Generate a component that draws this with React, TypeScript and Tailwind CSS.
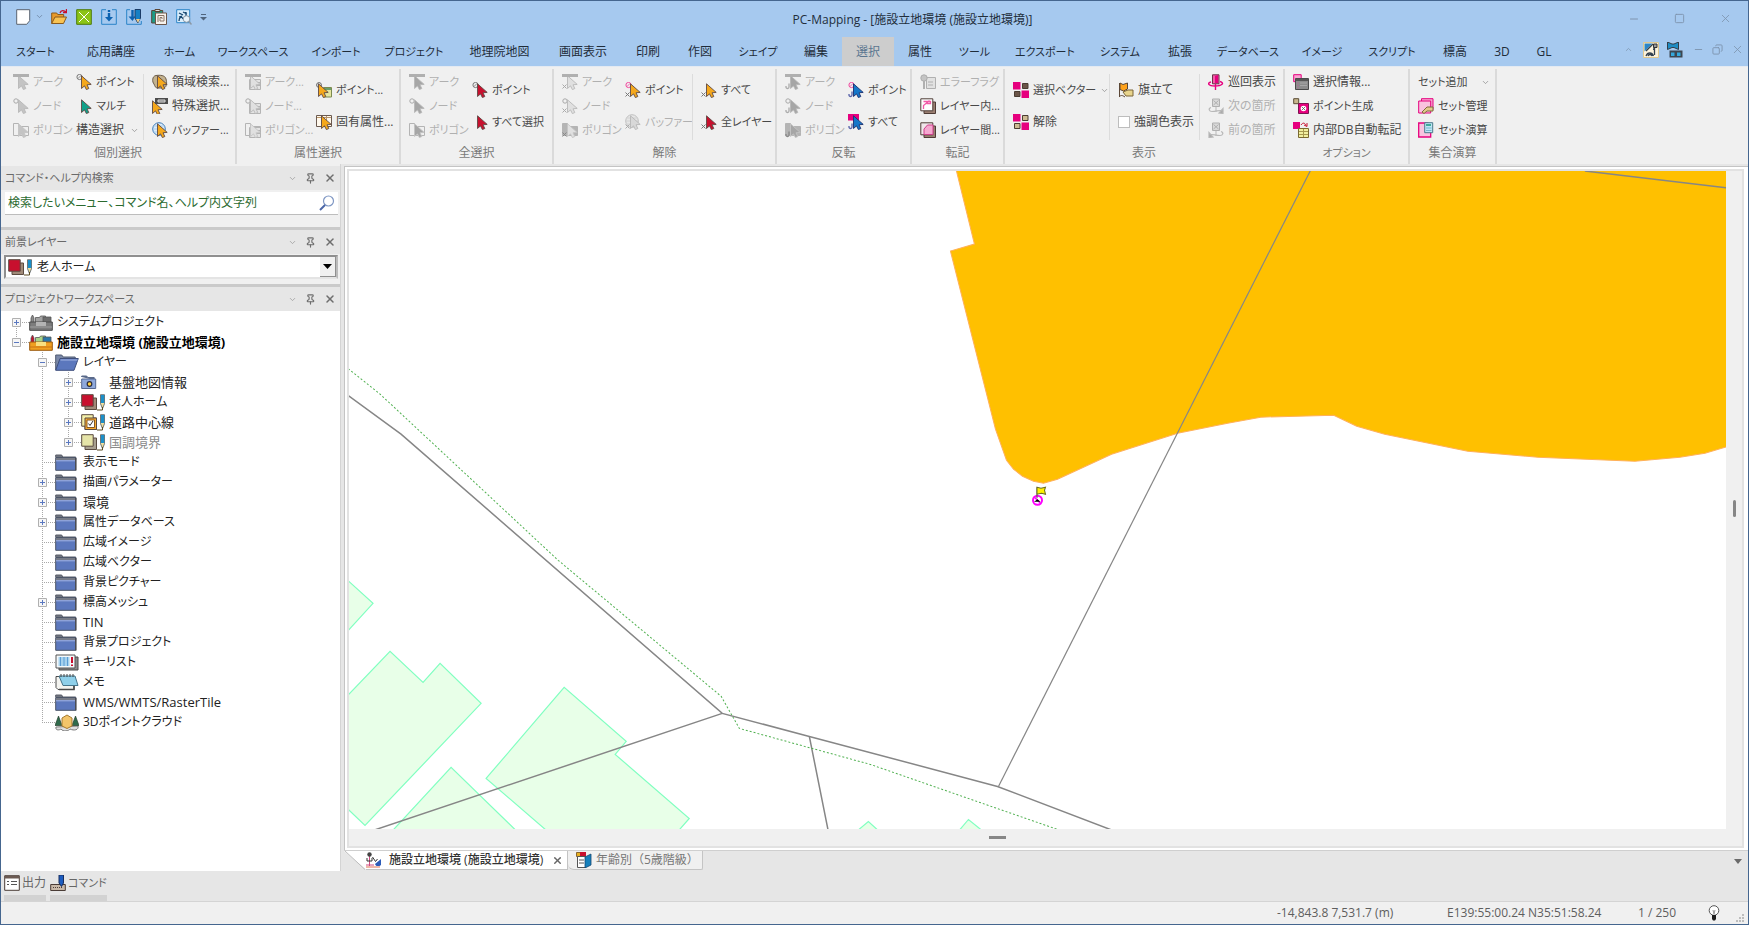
import { ReactNode } from "react";
import { ChevronDown, ChevronUp, Minus, Pin, Square, X, Copy } from "lucide-react";
import clsx from "clsx";

const isKana = (t: string) => (t.match(/[\u3040-\u30ff]/g) ?? []).length * 2 > t.replace(/\./g, "").length;

/* ---------- small drawings ---------- */

const Ico = ({ w = 16, h = 16, children }: { w?: number; h?: number; children: ReactNode }) => (
  <svg width={w} height={h} viewBox={`0 0 ${w} ${h}`} fill="none" className="shrink-0" aria-hidden="true">
    {children}
  </svg>
);

const ORANGE = "#f5a81c";
const RED = "#c8102e";
const PINK = "#e6007e";

const Arrow = ({ c, line = "#5f4a45" }: { c: string; line?: string }) => (
  <path d="M5.500 1.800V14.500l3-2.600 1.900 3.700 2.400-1.100-1.800-3.700 4.200-.4z" fill={c} stroke={line} strokeWidth=".9" strokeLinejoin="round" />
);

type Mark = "none" | "table" | "x" | "u";

// Little sign in the corner that tells the disabled tools apart
const MarkSign = ({ kind, c = "#aaa" }: { kind: Mark; c?: string }) => {
  if (kind === "x") return <path d="M.5 10.500l4 4m0-4l-4 4" stroke={c} />;
  if (kind === "u") return <path d="M4 9.500v3.500c0 2-3 2-3 0v-1" stroke={c} strokeWidth="1.300" />;
  if (kind === "table") return <path d="M4.500 5.500h11v10h-11zM5 8.500h10M5 11.500h10" stroke="#b4b4b4" fill="#e4e4e4" />;
  return null;
};

const ArcIcon = ({ mark = "none", c = "#a6a6a6" }: { mark?: Mark; c?: string }) => (
  <Ico>
    <MarkSign kind={mark} />
    <Arrow c={c} line="#b8b8b8" />
    <path d="M0 0h16v3H0z" fill="#b0b0b0" />
  </Ico>
);

const NodeIcon = ({ mark = "none", c = "#a6a6a6" }: { mark?: Mark; c?: string }) => (
  <Ico>
    <MarkSign kind={mark} />
    <circle cx="3" cy="3" r="2.200" stroke="#a8a8a8" />
    <Arrow c={c} line="#b8b8b8" />
  </Ico>
);

const PolygonIcon = ({ mark = "none", solid, c = "#a6a6a6" }: { mark?: Mark; solid?: boolean; c?: string }) => (
  <Ico>
    <path d="M.5 1.500h5v3h10v9H.5z" fill={solid ? "#b4b4b4" : "#f0f0f0"} stroke="#b4b4b4" />
    <MarkSign kind={mark} c={solid ? "#888" : "#aaa"} />
    <Arrow c={c} line="#c4c4c4" />
  </Ico>
);

const PointIcon = ({ c, ring = "#777", mark = "none", line }: { c: string; ring?: string; mark?: Mark; line?: string }) => (
  <Ico>
    <circle cx="3.500" cy="3" r="2.600" stroke={ring} />
    <path d="M2 4.500l3-3" stroke={ring} strokeWidth=".8" />
    <MarkSign kind={mark} c={mark === "u" ? "#5560a8" : "#777"} />
    <Arrow c={c} line={line} />
  </Ico>
);

const PlainArrow = ({ c, mark = "none" }: { c: string; mark?: Mark }) => (
  <Ico>
    <MarkSign kind={mark} c="#777" />
    <Arrow c={c} />
  </Ico>
);

const AreaIcon = (
  <Ico>
    <path d="M4 1.500C0 2 0 8 2 10c1 2 1 4 4 4h6c3-1 3-6 2-9-1-4-6-4-10-3.500z" fill="#c3b28e" stroke="#6b5c4b" />
    <Arrow c={ORANGE} />
  </Ico>
);
const SpecialIcon = (
  <Ico>
    <g transform="translate(-5 1)"><Arrow c={ORANGE} /></g>
    <path d="M3 0h13v6H3z" fill="#4d4d4d" />
    <path d="M6 2h7v2H6z" stroke="#ddd" fill="#777" />
  </Ico>
);
const BufferIcon = ({ off }: { off?: boolean }) => (
  <Ico>
    <circle cx="7" cy="7" r="6.300" fill={off ? "#e6e6e6" : "#dcecfa"} stroke={off ? "#c0c0c0" : "#3c7ab8"} />
    <path d="M2 4h10M1 7h12M2 10h10" stroke={off ? "#d2d2d2" : "#a9cdea"} />
    {off && <MarkSign kind="x" />}
    <Arrow c={off ? "#d8d8d8" : ORANGE} line={off ? "#b8b8b8" : undefined} />
  </Ico>
);
const PointAttrIcon = (
  <Ico>
    <path d="M7.500 5.500h8v9.500h-8z" fill="#e4e5a0" stroke="#7c8a50" />
    <path d="M8 6h7v2H8z" fill="#6aa06a" />
    <circle cx="3" cy="3" r="2.400" stroke="#666" />
    <g transform="translate(-3 0)"><Arrow c={ORANGE} /></g>
  </Ico>
);
const OwnAttrIcon = (
  <Ico>
    <path d="M.5 1.500h15v11H.5z" fill="#fff8ec" stroke="#6b5a50" />
    <path d="M1 3.500h14M5.500 2v10M10.500 2v10" stroke="#b8956a" />
    <Arrow c={ORANGE} />
  </Ico>
);
const InvertAllIcon = (
  <Ico>
    <path d="M0 0h11v6.500H0z" fill={PINK} />
    <MarkSign kind="u" c="#5560a8" />
    <Arrow c="#1576c8" line="#1a2f6e" />
  </Ico>
);
const ErrorFlagIcon = (
  <Ico>
    <path d="M6.500 3.500h9v11h-9z" fill="#e2e2e2" stroke="#b0b0b0" />
    <path d="M8 8h5M8 11h5" stroke="#b0b0b0" />
    <circle cx="4" cy="4" r="3.200" fill="#c4c4c4" stroke="#adadad" />
    <path d="M4 7v8" stroke="#b0b0b0" strokeWidth="2" />
  </Ico>
);
const LayerInIcon = (
  <Ico>
    <path d="M4 4h11.500v11.500H4z" fill="#9b7f72" stroke="#4e3c36" />
    <path d="M.8.8h12v12H.8z" fill="#fff" stroke="#4e3c36" />
    <path d="M3.500 11V7.500l6-5M3.500 3.500h7v2h-4" stroke="#f25aa8" strokeWidth="1.300" />
  </Ico>
);
const LayerBetweenIcon = (
  <Ico>
    <path d="M4 4h11.500v11.500H4z" fill="#9b7f72" stroke="#4e3c36" />
    <path d="M.8.8h12v12H.8z" fill="#f0e6ea" stroke="#4e3c36" />
    <path d="M4 12.500V7l3.500-4H13v9.500z" fill="#f5a8d0" stroke="#d0408c" />
  </Ico>
);
const VectorIcon = ({ c }: { c: string }) => (
  <Ico>
    <path d="M0 0h7.500v7.500H0zM8.500 8.500H16V16H8.500z" fill={PINK} />
    <path d="M9.500 1.500h5.500v5H9.500zM1.500 9.500h5.500v5H1.500z" fill={c} stroke="#4a3c32" />
  </Ico>
);
const FlagIcon = (
  <Ico>
    <path d="M1.500 1v14" stroke="#5b4636" />
    <path d="M2 1l3 1.500L9.500 1v6L5.500 9 2 7.500z" fill="#ffa21a" stroke="#5b4636" />
    <path d="M5 10l5-2h5v6H8z" fill="#e8d48c" stroke="#7a6538" />
    <path d="M1 15c2-2 3-2 6 0" stroke="#5b4636" />
  </Ico>
);
const TourIcon = (
  <Ico>
    <path d="M4.500.8h6.500v9H4.500z" fill="#f25aa8" stroke="#6b3048" />
    <path d="M7 2l3-1v8H7z" fill={PINK} />
    <path d="M3 8c-4 1-3 4 4 4s10-3 5-4.500M7.500 10v6" stroke={PINK} strokeWidth="1.400" />
  </Ico>
);
const SpotIcon = ({ back }: { back?: boolean }) => (
  <Ico>
    <path d="M4.500 1h7v7.500h-7zM5.500 2.500l5 4.500m0-4.500L5.500 7" fill="#dadada" stroke="#b0b0b0" />
    <path d="M8 9v5" stroke="#b8b8b8" />
    <g stroke="#b8b8b8" strokeWidth="1.200">
      {back ? (
        <>
          <path d="M13 9.500c3 1 2 4-1 4-4 0-6-1-9-1" />
          <path d="M1 10.500v5l4-.5z" fill="#a8a8a8" />
        </>
      ) : (
        <>
          <path d="M3 9.500c-3 1-2 4 1 4 4 0 6-1 9-1" />
          <path d="M15 10.500v5l-4-.5z" fill="#a8a8a8" />
        </>
      )}
    </g>
  </Ico>
);
const SelInfoIcon = (
  <Ico>
    <path d="M.7.7h7.500v7H.7z" fill="#f8a6d2" stroke={PINK} />
    <path d="M2.500 4.500h13v11h-13z" fill="#8c8c8c" stroke="#4a4a4a" />
    <path d="M3 5h12v2H3z" fill="#555" />
    <path d="M4.500 9h1M4.500 11.500h1M4.500 14h1" stroke="#c0589a" />
    <path d="M7 9h7M7 11.500h7" stroke="#a8a8a8" />
  </Ico>
);
const MakePointIcon = (
  <Ico>
    <path d="M.7.7h5v5h-5z" fill="#c8b88e" stroke="#5b4c36" />
    <path d="M5.500 5.500h10v10h-10z" fill={PINK} stroke="#7d1450" />
    <circle cx="10.500" cy="10.500" r="2.800" fill="#fff" />
    <path d="M9 9l3 3m0-3l-3 3" stroke="#555" strokeWidth=".8" />
  </Ico>
);
const AutoCopyIcon = (
  <Ico>
    <path d="M0 0h7v7H0z" fill={PINK} />
    <path d="M8 3c2-3 4-2 5 .5M11 3l3 1.500V1" stroke={RED} />
    <path d="M5.500 6.500h10v9h-10z" fill="#f2f0a0" stroke="#7a6a30" />
    <path d="M6 9.500h9M6 12.500h9M10.500 7v8" stroke="#a89a50" />
  </Ico>
);
const SetManageIcon = (
  <Ico>
    <path d="M3.500.7H15v11H3.500z" fill="#f6a5cf" stroke={PINK} />
    <path d="M.7 3h12v12H.7z" fill="#f9c3df" stroke={PINK} />
    <path d="M4 14l5-5h6v4H9l-3 2.500z" fill="#e2cb8c" stroke="#7d6a3c" />
  </Ico>
);
const SetCalcIcon = (
  <Ico>
    <path d="M.7 1h9v3h3v11H.7z" fill="#f9c3df" stroke={PINK} strokeWidth="1.300" />
    <path d="M6.700.7h8v10h-8z" fill="#bfe6f5" stroke="#4c7a8c" />
    <path d="M8 3h5" stroke="#15987c" strokeWidth="1.500" />
    <path d="M8 6h5.500M8 8.500h5.500" stroke="#72b7cf" />
  </Ico>
);

/* ---------- title bar ---------- */

const QUICK: { label: string; icon: ReactNode }[] = [
  {
    label: "開く",
    icon: (
      <Ico>
        <path d="M.7 14.500V4h5l1 1.500h6v3" fill="#e89a2a" stroke="#8a5a1c" />
        <path d="M.7 14.500L4 8h11.500l-3 6.500z" fill="#f8c352" stroke="#8a5a1c" />
        <path d="M9 4c1-3 4-3 6-1M15.500 0v3.500H12" stroke={RED} strokeWidth="1.300" />
      </Ico>
    ),
  },
  {
    label: "閉じる",
    icon: (
      <Ico>
        <path d="M.7.7h14.600v14.600H.7z" fill="#8cc417" stroke="#4d7a0c" />
        <path d="M3 3l10 10M13 3L3 13" stroke="#fff" />
      </Ico>
    ),
  },
  {
    label: "保存",
    icon: (
      <Ico>
        <path d="M5 .7H.7v14.600h14.600V.7H11" stroke="#2b84c8" />
        <path d="M8 1v2M8 4v5" stroke="#0c62b0" strokeWidth="2.400" />
        <path d="M4 8h8l-4 4.500z" fill="#0c62b0" />
      </Ico>
    ),
  },
  {
    label: "編集保存",
    icon: (
      <Ico>
        <path d="M4 .7H.7v14.600h14.600V12" stroke="#2b84c8" />
        <path d="M6.500 1v8" stroke="#0c62b0" strokeWidth="2.400" />
        <path d="M2.500 7.500h7L6.500 12z" fill="#0c62b0" />
        <path d="M9 .5h5.500V9l-2.700 5L9 9z" fill="#1680c4" stroke="#1b3c68" />
        <path d="M10 10h4l-2 4z" fill="#f0cc88" />
      </Ico>
    ),
  },
  {
    label: "貼り付け",
    icon: (
      <Ico>
        <path d="M.7 1.500h11V14H.7z" fill="#1d9b86" stroke="#5b4636" />
        <path d="M4 .5h5v2H4z" fill="#ddd" stroke="#5b4636" />
        <path d="M4.500 4h11v11.500h-11z" fill="#f7f2ec" stroke="#6b564a" />
        <path d="M7 13V6.500h6V12H9V8.500h2V10" stroke="#8a7466" />
      </Ico>
    ),
  },
  {
    label: "検索",
    icon: (
      <Ico>
        <path d="M.7.7h13v13H.7z" fill="#d9edfb" stroke="#2b84c8" />
        <path d="M3 12c0-4 3-5 4-2M3 4l4 2m0-3l4 2M10 3v4M3 8l3-1" stroke="#15456e" strokeWidth="1.300" />
        <circle cx="10.500" cy="10" r="3.300" fill="#e7f3fb" stroke="#8b98a5" />
        <path d="M13 12.500l2.500 3" stroke="#8b98a5" strokeWidth="1.500" />
      </Ico>
    ),
  },
];

const TitleBar = () => (
  <div className="grid grid-cols-3 items-center h-9 pt-px">
    <div className="flex items-center pl-[15px] pb-1.5 h-full">
      <button aria-label="新規" className="mr-1">
        <Ico w={15}>
          <path d="M.7.7h13v11l-3 3.600H.7z" fill="#fff" stroke="#5c6470" />
        </Ico>
      </button>
      <ChevronDown size={9} className="text-[#68809c] mr-1" />
      <div className="flex items-center gap-[9px] pl-[3px]">
        {QUICK.map((q) => (
          <button key={q.label} aria-label={q.label}>{q.icon}</button>
        ))}
      </div>
      <button aria-label="カスタマイズ" className="ml-2">
        <Ico w={7} h={8}>
          <path d="M1 1.500h5" stroke="#50657e" />
          <path d="M0 4h7L3.500 7.500z" fill="#50657e" />
        </Ico>
      </button>
    </div>
    <h1 className="text-center text-[#222e3c] pl-[76px] whitespace-nowrap">PC-Mapping - [施設立地環境 (施設立地環境)]</h1>
    <div className="flex items-center justify-end gap-[34px] pr-4 pb-0.5 text-[#7e94ae]">
      <button aria-label="最小化"><Minus size={12} strokeWidth={2} /></button>
      <button aria-label="最大化"><Square size={11} strokeWidth={2} /></button>
      <button aria-label="閉じる"><X size={13} strokeWidth={1.5} /></button>
    </div>
  </div>
);

const TABS = [
  { name: "スタート", w: "w-[69px]" },
  { name: "応用講座", w: "w-[82px]" },
  { name: "ホーム", w: "w-[55px]" },
  { name: "ワークスペース", w: "w-[92px]" },
  { name: "インポート", w: "w-[74px]" },
  { name: "プロジェクト", w: "w-[82px]" },
  { name: "地理院地図", w: "w-[89px]" },
  { name: "画面表示", w: "w-[78px]" },
  { name: "印刷", w: "w-[52px]" },
  { name: "作図", w: "w-[52px]" },
  { name: "シェイプ", w: "w-[64px]" },
  { name: "編集", w: "w-[52px]" },
  { name: "選択", w: "w-[52px]" },
  { name: "属性", w: "w-[52px]" },
  { name: "ツール", w: "w-[57px]" },
  { name: "エクスポート", w: "w-[84px]" },
  { name: "システム", w: "w-[66px]" },
  { name: "拡張", w: "w-[54px]" },
  { name: "データベース", w: "w-[82px]" },
  { name: "イメージ", w: "w-[66px]" },
  { name: "スクリプト", w: "w-[74px]" },
  { name: "標高", w: "w-[52px]" },
  { name: "3D", w: "w-[42px]" },
  { name: "GL", w: "w-[42px]" },
];

const MenuBar = () => (
  <div className="flex items-stretch h-[29px]">
    <nav className="flex">
      {TABS.map((t) => (
        <button
          key={t.name}
          className={clsx(
            "shrink-0 flex items-center justify-center whitespace-nowrap pt-px",
            t.w,
            isKana(t.name) && "text-[11px]",
            t.name === "選択" ? "bg-[#cdcdcd] text-[#5b7690]" : "text-[#1f2c3a]"
          )}
        >
          {t.name}
        </button>
      ))}
    </nav>
    <div className="ml-auto flex items-center gap-2 pr-1 pb-1 text-[#7e94ae]">
      <button aria-label="リボンを畳む" className="mr-0.5"><ChevronUp size={9} /></button>
      <button aria-label="地図表示">
        <Ico>
          <path d="M.5.5h15v15H.5z" fill="#fdf3dc" stroke="#e0c890" />
          <path d="M1.500 1.500h8l-8 8z" fill="#2b86c8" />
          <path d="M3 14c1.500-4 6-4 7.500 0M5 14c1-2 3-2 4 0M3 9l7-7M10.500 8l1-3v8" stroke="#32404e" strokeWidth="1.300" />
          <path d="M10.500 2h3.500v3.500h-3.500z" fill="#999" stroke="#333" />
        </Ico>
      </button>
      <button aria-label="ウィンドウ配置">
        <Ico>
          <path d="M.5 0v7.500L5 5.500h2l4.500 2V0L7 2H5z" fill="#1d8cc4" stroke="#333e48" />
          <path d="M2.500 8.500h13v7h-13z" fill="#3d4650" />
          <path d="M4 10.500h3.500V14H4zM10 10.500h3.500V14H10z" fill="#35a8dc" />
        </Ico>
      </button>
      <button aria-label="子を最小化" className="pl-0.5"><Minus size={11} /></button>
      <button aria-label="元に戻す"><Copy size={11} className="-scale-x-100" /></button>
      <button aria-label="子を閉じる"><X size={13} strokeWidth={1.5} /></button>
    </div>
  </div>
);

/* ---------- ribbon ---------- */

type Cmd = { t: string; icon?: ReactNode; off?: boolean; drop?: boolean; check?: boolean };
type Col = { w?: string; sep?: boolean; items: Cmd[] };
type Group = { name: string; w: string; pad: string; cols: Col[] };

const LIGHT = "#e0e0e0";

const GROUPS: Group[] = [
  {
    name: "個別選択",
    w: "w-[236px]",
    pad: "pl-3",
    cols: [
      {
        w: "w-[63px]",
        items: [
          { t: "アーク", icon: <ArcIcon c="#c4c4c4" />, off: true },
          { t: "ノード", icon: <NodeIcon c="#c4c4c4" />, off: true },
          { t: "ポリゴン", icon: <PolygonIcon c="#c4c4c4" />, off: true },
        ],
      },
      {
        w: "w-[67px]",
        items: [
          { t: "ポイント", icon: <PointIcon c={ORANGE} /> },
          { t: "マルチ", icon: <PlainArrow c="#12a088" /> },
          { t: "構造選択", drop: true },
        ],
      },
      {
        sep: true,
        items: [
          { t: "領域検索...", icon: AreaIcon },
          { t: "特殊選択...", icon: SpecialIcon },
          { t: "バッファー...", icon: <BufferIcon /> },
        ],
      },
    ],
  },
  {
    name: "属性選択",
    w: "w-[164px]",
    pad: "pl-2",
    cols: [
      {
        w: "w-[71px]",
        items: [
          { t: "アーク...", icon: <ArcIcon mark="table" c={LIGHT} />, off: true },
          { t: "ノード...", icon: <NodeIcon mark="table" c={LIGHT} />, off: true },
          { t: "ポリゴン...", icon: <PolygonIcon mark="table" c={LIGHT} />, off: true },
        ],
      },
      {
        items: [
          { t: "ポイント...", icon: PointAttrIcon },
          { t: "固有属性...", icon: OwnAttrIcon },
        ],
      },
    ],
  },
  {
    name: "全選択",
    w: "w-[153px]",
    pad: "pl-2",
    cols: [
      {
        w: "w-[63px]",
        items: [
          { t: "アーク", icon: <ArcIcon />, off: true },
          { t: "ノード", icon: <NodeIcon />, off: true },
          { t: "ポリゴン", icon: <PolygonIcon />, off: true },
        ],
      },
      {
        items: [
          { t: "ポイント", icon: <PointIcon c={RED} /> },
          { t: "すべて選択", icon: <PlainArrow c={RED} /> },
        ],
      },
    ],
  },
  {
    name: "解除",
    w: "w-[223px]",
    pad: "pl-2",
    cols: [
      {
        w: "w-[63px]",
        items: [
          { t: "アーク", icon: <ArcIcon mark="x" c={LIGHT} />, off: true },
          { t: "ノード", icon: <NodeIcon mark="x" c={LIGHT} />, off: true },
          { t: "ポリゴン", icon: <PolygonIcon mark="x" solid c={LIGHT} />, off: true },
        ],
      },
      {
        w: "w-[67px]",
        items: [
          { t: "ポイント", icon: <PointIcon c={ORANGE} ring="#f0479e" mark="x" /> },
          { t: "バッファー", icon: <BufferIcon off />, off: true },
        ],
      },
      {
        sep: true,
        items: [
          { t: "すべて", icon: <PlainArrow c={ORANGE} mark="x" /> },
          { t: "全レイヤー", icon: <PlainArrow c={RED} mark="x" /> },
        ],
      },
    ],
  },
  {
    name: "反転",
    w: "w-[135px]",
    pad: "pl-2",
    cols: [
      {
        w: "w-[63px]",
        items: [
          { t: "アーク", icon: <ArcIcon mark="u" />, off: true },
          { t: "ノード", icon: <NodeIcon mark="u" />, off: true },
          { t: "ポリゴン", icon: <PolygonIcon mark="u" solid />, off: true },
        ],
      },
      {
        items: [
          { t: "ポイント", icon: <PointIcon c="#1576c8" ring="#f0479e" mark="u" line="#1a2f6e" /> },
          { t: "すべて", icon: InvertAllIcon },
        ],
      },
    ],
  },
  {
    name: "転記",
    w: "w-[93px]",
    pad: "pl-2",
    cols: [
      {
        items: [
          { t: "エラーフラグ", icon: ErrorFlagIcon, off: true },
          { t: "レイヤー内...", icon: LayerInIcon },
          { t: "レイヤー間...", icon: LayerBetweenIcon },
        ],
      },
    ],
  },
  {
    name: "表示",
    w: "w-[280px]",
    pad: "pl-2",
    cols: [
      {
        w: "w-[96px]",
        items: [
          { t: "選択ベクター", icon: <VectorIcon c="#6b5548" />, drop: true },
          { t: "解除", icon: <VectorIcon c="#cdbb92" /> },
        ],
      },
      {
        w: "w-[90px]",
        sep: true,
        items: [
          { t: "旗立て", icon: FlagIcon },
          { t: "強調色表示", check: true },
        ],
      },
      {
        sep: true,
        items: [
          { t: "巡回表示", icon: TourIcon },
          { t: "次の箇所", icon: <SpotIcon />, off: true },
          { t: "前の箇所", icon: <SpotIcon back />, off: true },
        ],
      },
    ],
  },
  {
    name: "オプション",
    w: "w-[125px]",
    pad: "pl-2",
    cols: [
      {
        items: [
          { t: "選択情報...", icon: SelInfoIcon },
          { t: "ポイント生成", icon: MakePointIcon },
          { t: "内部DB自動転記", icon: AutoCopyIcon },
        ],
      },
    ],
  },
  {
    name: "集合演算",
    w: "w-[87px]",
    pad: "pl-2",
    cols: [
      {
        w: "w-[76px]",
        items: [
          { t: "セット追加", drop: true },
          { t: "セット管理", icon: SetManageIcon },
          { t: "セット演算", icon: SetCalcIcon },
        ],
      },
    ],
  },
];

const Command = ({ cmd, tall }: { cmd: Cmd; tall: boolean }) => {
  const size = tall ? "h-8" : "h-6";
  if (cmd.check) {
    return (
      <label className={clsx("flex items-center gap-1 whitespace-nowrap", size)}>
        <input type="checkbox" className="appearance-none size-3 bg-white border border-[#bdbdbd] checked:bg-[#5b7690]" />
        {cmd.t}
      </label>
    );
  }
  return (
    <button disabled={cmd.off} className={clsx("flex items-center gap-1 whitespace-nowrap disabled:text-[#b0b0b0]", size, isKana(cmd.t) && "text-[11px]")}>
      {cmd.icon}
      <span>{cmd.t}</span>
      {cmd.drop && <ChevronDown size={9} className="shrink-0 ml-auto mr-1 text-[#8c8c8c]" />}
    </button>
  );
};

const Ribbon = () => (
  <div className="flex bg-[#f0f0f0] h-[98px] pt-0.5 border-t border-[#e4eaf2] text-[#484848]">
    {GROUPS.map((g) => (
      <section key={g.name} className={clsx("shrink-0 flex flex-col h-[95px] border-r-2 border-[#dadada]", g.w)}>
        <div className={clsx("flex h-[74px] pt-px", g.pad)}>
          {g.cols.map((col, i) => (
            <div key={i} className={clsx("shrink-0 flex h-[72px]", col.w)}>
              {col.sep && <span className="shrink-0 w-px h-[66px] mt-1 mr-2 bg-[#dcdcdc]" />}
              <div className="grow min-w-0 flex flex-col justify-center">
                {col.items.map((cmd) => (
                  <Command key={cmd.t} cmd={cmd} tall={col.items.length === 2} />
                ))}
              </div>
            </div>
          ))}
        </div>
        <h2 className={clsx("text-center text-[#7a7a7a]", isKana(g.name) && "text-[11px]")}>{g.name}</h2>
      </section>
    ))}
  </div>
);

/* ---------- left dock ---------- */

const PanelHeader = ({ title }: { title: string }) => (
  <div className="shrink-0 flex items-center h-6 pl-1 pr-1 bg-[#e6e6e6] text-[#6a6a6a]">
    <h2 className={clsx("grow", isKana(title) && "text-[11px]")}>{title}</h2>
    <div className="flex items-center gap-2 text-[#6e6e6e]">
      <button aria-label={`${title} メニュー`}><ChevronDown size={9} className="text-[#999]" /></button>
      <button aria-label={`${title} 固定`}><Pin size={11} strokeWidth={2.5} /></button>
      <button aria-label={`${title} 閉じる`}><X size={12} strokeWidth={3} /></button>
    </div>
  </div>
);

const PencilLayer = ({ front, back, check }: { front: string; back: string; check?: boolean }) => (
  <Ico w={24} h={17}>
    <path d="M4 4h11.500v11.500H4z" fill={back} stroke="#5b4b40" />
    <path d="M.7.7h11.500v11.500H.7z" fill={front} stroke="#5b4b40" />
    {check && <path d="M4 4h11.500v11.500H4z" fill={back} stroke="#5b4b40" />}
    {check && <path d="M6 6h7.500v7.500H6z" fill="#fff" stroke="#8a5a1c" />}
    {check && <path d="M7.500 9.500l1.500 2 3-4.500" stroke="#333" />}
    <path d="M19.500.7h4v9l-2 5-2-5z" fill="#f0e0a0" stroke="#4b5560" strokeWidth=".8" />
    <path d="M20 1h3.200v8H20z" fill="#1c8fc8" />
    <path d="M16 16h5.500v-3" stroke="#5b4b20" />
  </Ico>
);

const Folder = () => (
  <Ico w={24} h={17}>
    <path d="M.7 3V1h6l1 2h13v3" fill="#70757f" stroke="#5a5f6a" />
    <path d="M.7 3.500h20v12.800H.7z" fill="#5b77bd" stroke="#4c5668" />
    <path d="M1 4h19v2H1z" fill="#777b86" />
    <path d="M1 6.800h19" stroke="#a4b6e4" />
    <path d="M20.800 4v12.500" stroke="#4a4a50" strokeWidth="1.400" />
  </Ico>
);
const OpenFolder = () => (
  <Ico w={24} h={17}>
    <path d="M.7 16V1h6l1.500 2h12v3" fill="#7b89a8" stroke="#4f5a70" />
    <path d="M.7 16.300L5 4.500h18.300L19 16.300z" fill="#5b77bd" stroke="#3f4f7c" />
    <path d="M5.500 6h17" stroke="#a4b6e4" />
  </Ico>
);
const BaseMapIcon = () => (
  <Ico w={24} h={17}>
    <path d="M.7 3V2h5l1 1.500h6.500V6" fill="#5b6a8a" stroke="#5b6a8a" />
    <path d="M.7 5h14v9.500H.7z" fill="#8fa9dc" stroke="#56688f" />
    <circle cx="8.500" cy="10" r="2.300" fill="#ffd040" stroke="#2c2c3c" strokeWidth="1.200" />
  </Ico>
);
const ToolboxIcon = ({ gray }: { gray?: boolean }) => (
  <Ico w={24} h={17}>
    <path d="M2 9V4l1.500-3L5 4v5" fill={gray ? "#8b8b8b" : RED} stroke="#555" strokeWidth=".8" />
    <path d="M6.500 9V3.500h4l1-1.500h5v7" fill={gray ? "#a2a2a2" : "#a8d488"} stroke="#555" strokeWidth=".8" />
    <path d="M14 3h8v6h-8z" fill={gray ? "#6e6e6e" : "#2b77a8"} stroke="#555" strokeWidth=".8" />
    <path d="M.7 8h22.600v8.300H.7z" fill={gray ? "#7c7c7c" : "#f0a020"} stroke={gray ? "#4a4a4a" : "#9c5a10"} />
    <path d="M7 8h10v4H7z" fill={gray ? "#b4b4b4" : "#f8e080"} />
    <path d="M1 13h22" stroke={gray ? "#a0a0a0" : "#c87414"} />
  </Ico>
);
const KeyListIcon = () => (
  <Ico w={24} h={17}>
    <path d="M4 3h19v13H4z" fill="#8a8a8a" stroke="#4a4a4a" />
    <path d="M1 1h19v13H1z" fill="#f4f8fa" stroke="#555" />
    <path d="M3.500 3h11v9h-11z" fill="#a6d2ee" />
    <path d="M5.500 3v9M9 3v9M12.500 3v9" stroke="#5b9cd4" />
    <path d="M17 3v6m0 1.500V12" stroke={RED} strokeWidth="2" />
  </Ico>
);
const MemoIcon = () => (
  <Ico w={24} h={17}>
    <path d="M1 2.500h18v13H3l-2-2z" fill="#f4f4f0" stroke="#4a4a4a" />
    <path d="M4 15.500h15v-4" stroke="#4a4a4a" strokeWidth="1.600" />
    <path d="M4 2h16l3 9.500H8z" fill="#8fd0ea" stroke="#45748a" />
    <path d="M6 0v3M9 0v3M12 0v3M15 0v3M18 0v3" stroke="#444" />
  </Ico>
);
const CloudIcon = () => (
  <Ico w={24} h={17}>
    <path d="M1 13c-1 4 4 3 5 2 2 3 8 2 9 0 4 2 9 1 8-3z" fill="#e0e0e0" stroke="#7a7a7a" />
    <path d="M3.500 2L0 11.500h7zM20.500 2L17 11.500h7z" fill="#2f6b4c" stroke="#28402e" strokeWidth=".7" />
    <path d="M7 4l5-3 5 3v8l-5 2.500L7 12z" fill="#f3c56a" stroke="#a57a30" />
  </Ico>
);

type Guide = "blank" | "line" | "branch" | "last" | "plus" | "minus" | "plusLast" | "minusLast" | "plusTop";

// One cell of the tree's guide lines, with the expand box where there is one
const GuideCell = ({ kind }: { kind: Guide }) => {
  const box = kind.startsWith("plus") || kind.startsWith("minus");
  const up = kind !== "blank" && kind !== "plusTop";
  const down = kind === "line" || kind === "branch" || kind === "plus" || kind === "minus" || kind === "plusTop";
  return (
    <Ico w={26} h={20}>
      <g stroke="#a8a8a8" strokeDasharray="1 1">
        {up && <path d="M13.500 0v10" />}
        {down && <path d="M13.500 10v10" />}
        {kind !== "blank" && kind !== "line" && <path d="M13 10.500h13" />}
      </g>
      {box && (
        <g>
          <path d="M9.500 6.500h8v8h-8z" fill="#f6f6f6" stroke="#b0b0b0" />
          <path d="M11 10.500h5" stroke="#5a78c0" />
          {kind.startsWith("plus") && <path d="M13.500 8v5" stroke="#5a78c0" />}
        </g>
      )}
    </Ico>
  );
};

const TREE: { t: string; g: Guide[]; icon: ReactNode; bold?: boolean; dim?: boolean }[] = [
  { t: "システムプロジェクト", g: ["plusTop"], icon: <ToolboxIcon gray /> },
  { t: "施設立地環境 (施設立地環境)", g: ["minusLast"], icon: <ToolboxIcon />, bold: true },
  { t: "レイヤー", g: ["blank", "minus"], icon: <OpenFolder /> },
  { t: "基盤地図情報", g: ["blank", "line", "plus"], icon: <BaseMapIcon /> },
  { t: "老人ホーム", g: ["blank", "line", "plus"], icon: <PencilLayer front={RED} back="#a08a78" /> },
  { t: "道路中心線", g: ["blank", "line", "plus"], icon: <PencilLayer front="#f4f0a8" back="#f5a832" check /> },
  { t: "国調境界", g: ["blank", "line", "plusLast"], icon: <PencilLayer front="#e6e4a8" back="#a8a090" />, dim: true },
  { t: "表示モード", g: ["blank", "branch"], icon: <Folder /> },
  { t: "描画パラメーター", g: ["blank", "plus"], icon: <Folder /> },
  { t: "環境", g: ["blank", "plus"], icon: <Folder /> },
  { t: "属性データベース", g: ["blank", "plus"], icon: <Folder /> },
  { t: "広域イメージ", g: ["blank", "branch"], icon: <Folder /> },
  { t: "広域ベクター", g: ["blank", "branch"], icon: <Folder /> },
  { t: "背景ピクチャー", g: ["blank", "branch"], icon: <Folder /> },
  { t: "標高メッシュ", g: ["blank", "plus"], icon: <Folder /> },
  { t: "TIN", g: ["blank", "branch"], icon: <Folder /> },
  { t: "背景プロジェクト", g: ["blank", "branch"], icon: <Folder /> },
  { t: "キーリスト", g: ["blank", "branch"], icon: <KeyListIcon /> },
  { t: "メモ", g: ["blank", "branch"], icon: <MemoIcon /> },
  { t: "WMS/WMTS/RasterTile", g: ["blank", "branch"], icon: <Folder /> },
  { t: "3Dポイントクラウド", g: ["blank", "last"], icon: <CloudIcon /> },
];

const LeftDock = () => (
  <aside className="shrink-0 w-[340px] flex flex-col pt-0.5 bg-[#f0f0f0] border-r border-[#d4d4d4]">
    <div className="h-16 border-b-[3px] border-[#cacaca]">
      <PanelHeader title="コマンド・ヘルプ内検索" />
      <div className="flex items-center h-[23px] ml-1 mr-0.5 mt-0.5 px-[3px] bg-white border-b border-[#bdbdbd]">
        <input
          type="text"
          aria-label="コマンド・ヘルプ内検索"
          placeholder="検索したいメニュー、コマンド名、ヘルプ内文字列"
          className="grow text-xs outline-none placeholder:text-[#2b6a2f]"
        />
        <button aria-label="検索">
          <Ico>
            <circle cx="9.500" cy="6" r="5" fill="#fff" stroke="#8098c4" strokeWidth="1.200" />
            <path d="M6 10l-5 5" stroke="#4c67a8" strokeWidth="2" />
          </Ico>
        </button>
      </div>
    </div>
    <div className="h-[57px] border-b-[3px] border-[#cacaca]">
      <PanelHeader title="前景レイヤー" />
      <div className="flex items-center h-6 ml-[3px] mr-0.5 mt-px bg-white border-2 border-[#8f8f8f] border-r-[#bbb] border-b-[#e4e4e4]">
        <span className="pl-0.5"><PencilLayer front={RED} back="#a08a78" /></span>
        <select aria-label="前景レイヤー" className="grow appearance-none pl-[5px] text-xs text-[#222] outline-none">
          <option>老人ホーム</option>
        </select>
        <span className="flex items-center justify-center w-4 h-5 bg-[#f0f0f0] border-r border-b border-[#8f8f8f]">
          <Ico w={9} h={5}><path d="M0 0h9L4.500 5z" fill="#000" /></Ico>
        </span>
      </div>
    </div>
    <PanelHeader title="プロジェクトワークスペース" />
    <ul className="grow bg-white pl-0.5 pt-px text-[#222]">
      {TREE.map((n) => (
        <li key={n.t} className="flex items-center h-5">
          {n.g.map((kind, i) => <GuideCell key={i} kind={kind} />)}
          {n.icon}
          <span
            className={clsx(
              "pl-1 whitespace-nowrap",
              isKana(n.t) ? "text-xs" : "text-[13px]",
              n.bold && "font-bold text-black",
              n.dim && "text-[#8a8a8a]"
            )}
          >
            {n.t}
          </span>
        </li>
      ))}
    </ul>
  </aside>
);

/* ---------- map ---------- */

const MapView = () => (
  <svg viewBox="349 171 1376 659" preserveAspectRatio="xMinYMin slice" className="grow min-w-0 w-full h-full bg-white" role="img" aria-label="地図">
    <g fill="#e8ffe8" stroke="#80ffc0" strokeWidth="1.200">
      <path d="M340 573l33 30-33 36z" />
      <path d="M340 703L390 651l33 31 17-19 41 40L365 825l-25-24z" />
      <path d="M389 834l62-67 69 67z" />
      <path d="M486 778l78-91 62 54-11 13 74 64-14 16H551z" />
      <path d="M855 832l13-11 12 11zM957 832l11-13 16 13z" />
    </g>
    <path
      d="M956 171L974 244 950 251 995 429l11 31 7 9 9 7 11 5 10 2 14-4 54-25 66-21 50-10 33-6 73-2 23 11 28 8 83 17 70 6 97 4 45-4 25-4 24-7V165H954z"
      fill="#ffc000"
      stroke="#ffb05a"
    />
    <g stroke="#868686" fill="none">
      <g strokeWidth="1.500">
        <path d="M345 393l4 3 52 38 321 279 87 23 188 50 118 45" />
        <path d="M722 713L370 831M809 736l19 95" />
      </g>
      <path d="M1310 170L998 786" strokeWidth="1.200" />
      <path d="M1584 171l143 17" strokeWidth="1.500" />
    </g>
    <path d="M345 366l34 27 179 167 163 136 18 32 131 36 190 66" fill="none" stroke="#50b050" strokeDasharray="2 2" />
    <g>
      <circle cx="1037" cy="500" r="4.500" fill="#fff" stroke="#ff00ff" strokeWidth="2" />
      <path d="M1034 497l6 6" stroke="#ff00ff" strokeWidth="1.500" />
      <path d="M1033.500 501.500l3.500-2.500 3 2.500z" fill="#000" />
      <path d="M1036.500 498v-11" stroke="#555" />
      <path d="M1036.500 487l4 1 4.500-1-1 3 1 4-4-1-4.500 1z" fill="#fff200" stroke="#6a6a20" />
    </g>
  </svg>
);

const MapFrame = () => (
  <div className="grow min-h-0 flex flex-col bg-white border-l border-t border-[#c4c4c4] p-0.5 pr-1">
    <div className="grow min-h-0 flex flex-col border-2 border-[#e2e2e2] bg-[#f0f0f0]">
      <div className="grow min-h-0 flex">
        <div className="grow min-w-0 min-h-0 overflow-hidden flex"><MapView /></div>
        <div className="shrink-0 w-4 flex justify-center items-center pt-4">
          <span className="w-[3px] h-[17px] rounded-full bg-[#868686]" />
        </div>
      </div>
      <div className="shrink-0 h-[17px] flex justify-center items-center pr-24">
        <span className="w-[17px] h-[3px] bg-[#868686]" />
      </div>
    </div>
  </div>
);

const DocTabs = () => (
  <div className="flex items-start h-[21px] bg-[#e6e6e6] border-t border-[#cfcfcf] pr-1.5">
    <div className="flex items-center h-[19px]">
      <svg width="22" height="19" viewBox="0 0 22 19" aria-hidden="true">
        <path d="M0 0h22v18.500L0 0z" fill="#fff" />
        <path d="M1 0l20 18.500" stroke="#bcbcbc" />
      </svg>
      <div className="flex items-center h-full w-[202px] bg-white border-b border-r border-[#c4c4c4] text-[#333]">
        <Ico>
          <path d="M3.500 3v13M0 13h8" stroke="#d04a80" />
          <circle cx="3.500" cy="2.500" r="2.200" fill="#444" />
          <path d="M1 6v3h5V6M6.500 5l3 4.500 2-2.500" stroke="#333" />
          <path d="M9 12l6-5v6c-2 2-5 2-6-1z" fill="#2d5cb8" />
          <path d="M0 14h14v2H0z" fill="#f0b8a8" />
        </Ico>
        <button className="pl-[7px] font-medium whitespace-nowrap">施設立地環境 (施設立地環境)</button>
        <button aria-label="タブを閉じる" className="ml-auto mr-1"><X size={11} strokeWidth={3} className="text-[#666]" /></button>
      </div>
      <button className="flex items-center gap-1 h-full w-[135px] pl-2 rounded-bl-md rounded-br-xs bg-[#f0f0f0] border-b border-r border-[#c4c4c4] text-[#777] whitespace-nowrap">
        <Ico>
          <path d="M.5.5h9v4h-9z" fill="#e8b020" stroke="#704a18" strokeWidth=".8" />
          <path d="M4 0h6v4H4z" fill={RED} />
          <path d="M1.500 4.500h8v11h-8z" fill="#fff" stroke="#555" />
          <path d="M3 8h5M3 11h5" stroke="#555" />
          <path d="M9 5l6-3v11l-6 3z" fill="#1580bc" stroke="#15456e" strokeWidth=".8" />
        </Ico>
        <span className="[font-feature-settings:normal]">年齢別（5歳階級）</span>
      </button>
    </div>
    <button aria-label="タブ一覧" className="ml-auto mt-2">
      <Ico w={8} h={5}><path d="M0 0h8L4 5z" fill="#6a6a6a" /></Ico>
    </button>
  </div>
);

/* ---------- bottom ---------- */

const OutputBar = () => (
  <div className="shrink-0 flex h-[31px] pl-[3px] gap-1 bg-[#e6e6e6] border-b border-[#d4d4d4] text-[#666]">
    <button className="flex flex-col justify-between pt-0.5">
      <span className="flex items-center gap-0.5">
        <Ico>
          <path d="M.7.7h14.600v14.600H.7z" fill="#fff" stroke="#4a3c36" />
          <path d="M1 1h14v2.500H1z" fill="#6b5a52" />
          <path d="M3 6.500h2m2 0h6M3 9.500h2m2 0h6" stroke="#555" />
        </Ico>
        出力
      </span>
      <span className="w-full h-1.5 bg-[#d2d2d2]" />
    </button>
    <button className="flex flex-col justify-between pt-0.5">
      <span className="flex items-center gap-0.5 text-[11px] leading-5">
        <Ico>
          <path d="M.7 9.500h14.600v6H.7z" fill="#c8b8a8" stroke="#4a3c36" />
          <path d="M3 12.500h10" stroke="#4a3c36" strokeDasharray="1 1" />
          <path d="M9 0h4.500v8l-2 3.500L9 8z" fill="#1c5cc0" stroke="#1a2f5e" />
        </Ico>
        コマンド
      </span>
      <span className="w-full h-1.5 bg-[#d2d2d2]" />
    </button>
  </div>
);

const StatusBar = () => (
  <footer className="shrink-0 flex items-center justify-end h-[22px] pr-1 bg-[#f0f0f0] text-[#5e5e5e] whitespace-nowrap">
    <span className="w-[170px]">-14,843.8 7,531.7 (m)</span>
    <span className="w-[191px]">E139:55:00.24 N35:51:58.24</span>
    <span className="w-[68px]">1 / 250</span>
    <Ico w={16}>
      <circle cx="8" cy="5.500" r="4.800" fill="#fff" stroke="#555" />
      <path d="M7 5l1 4 1-4" stroke="#999" />
      <path d="M6 10h4v4l-1 1.500H7L6 14z" fill="#1c1c1c" />
    </Ico>
    <span className="self-end pl-3.5">
      <Ico w={8} h={11}>
        <path d="M6 1h2v2H6zM3 4h2v2H3zM6 4h2v2H6zM0 7h2v2H0zM3 7h2v2H3zM6 7h2v2H6z" fill="#bdbdbd" />
      </Ico>
    </span>
  </footer>
);

export default function App() {
  return (
    <div className="h-screen min-h-[760px] flex flex-col overflow-hidden border border-[#45668f] bg-[#e6e6e6] text-xs leading-5 [font-family:'Open_Sans','Noto_Sans_CJK_JP',sans-serif] [font-feature-settings:'palt']">
      <header className="shrink-0">
        <div className="bg-[#a6c9ef]">
          <TitleBar />
          <MenuBar />
        </div>
        <Ribbon />
      </header>
      <main className="grow min-h-0 flex">
        <LeftDock />
        <div className="grow min-w-0 flex flex-col pt-0.5 pl-[3px]">
          <MapFrame />
          <DocTabs />
        </div>
      </main>
      <OutputBar />
      <StatusBar />
    </div>
  );
}
